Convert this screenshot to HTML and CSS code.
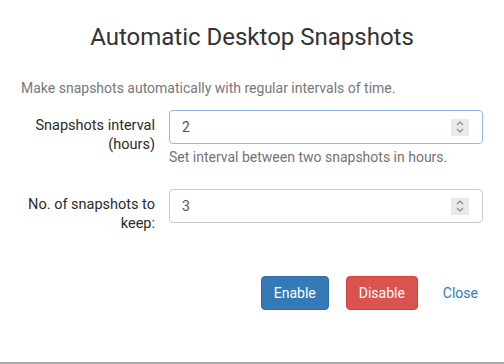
FILE: index.html
```html
<!DOCTYPE html>
<html lang="en">

<head>
    <meta charset="UTF-8">
    <meta name="viewport" content="width=device-width, initial-scale=1.0">
    <link rel="stylesheet" href="styles.css">
    <title>Automatic Desktop Snapshots</title>
</head>

<body>
    <div class="modal">
        <h1 class="title">Automatic Desktop Snapshots</h1>
        <p class="intro">Make snapshots automatically with regular intervals of time.</p>

        <div class="row">
            <label class="label">Snapshots interval (hours)</label>
            <div class="control">
                <div class="field focus">
                    <span class="value">2</span>
                    <span class="spin">
                        <svg width="10" height="14" viewBox="0 0 10 14">
                            <polyline points="2,5 5,2 8,5" />
                            <polyline points="2,9 5,12 8,9" />
                        </svg>
                    </span>
                </div>
                <div class="help">Set interval between two snapshots in hours.</div>
            </div>
        </div>

        <div class="row">
            <label class="label">No. of snapshots to keep:</label>
            <div class="control">
                <div class="field">
                    <span class="value">3</span>
                    <span class="spin">
                        <svg width="10" height="14" viewBox="0 0 10 14">
                            <polyline points="2,5 5,2 8,5" />
                            <polyline points="2,9 5,12 8,9" />
                        </svg>
                    </span>
                </div>
            </div>
        </div>

        <div class="footer">
            <button type="button" class="btn btn-primary">Enable</button>
            <button type="button" class="btn btn-danger">Disable</button>
            <button type="button" class="btn btn-link">Close</button>
        </div>
    </div>
    <div class="bottomLine"></div>
</body>

</html>
```
FILE: styles.css
```css
* {
    box-sizing: border-box;
}

html,
body {
    margin: 0;
    height: 364px;
    overflow: hidden;
}

body {
    background-color: #fff;
    color: #333;
    font-family: Roboto, "Liberation Sans", sans-serif;
    font-size: 14px;
    line-height: 20px;
    display: flex;
    flex-direction: column;
}

.modal {
    padding: 0 21px;
    flex: 1;
}

.title {
    margin: 22px 0 0;
    font-size: 24px;
    font-weight: 400;
    line-height: 30px;
    text-align: center;
}

.intro {
    margin: 26px 0 0;
    color: #777;
}

.row {
    display: flex;
    gap: 14px;
    margin-top: 12px;
}

.row + .row {
    margin-top: 22px;
}

.label {
    width: 134px;
    text-align: right;
    font-size: 14.5px;
    font-weight: 400;
    color: #2b2b2b;
    padding-top: 6px;
    line-height: 19px;
}

.control {
    flex: 1;
}

.field {
    height: 34px;
    border: 1px solid #ccc;
    border-radius: 4px;
    display: flex;
    align-items: center;
    padding: 0 12px;
}

.field.focus {
    border-color: #8cbbe3;
}

.value {
    flex: 1;
    color: #555;
}

.spin {
    width: 18px;
    height: 17px;
    background: #e9e9ed;
    display: flex;
    align-items: center;
    justify-content: center;
    margin-right: 1px;
}

.spin svg {
    fill: none;
    stroke: #8a8a8a;
    stroke-width: 1.2px;
}

.help {
    margin-top: 3px;
    color: #737373;
}

.footer {
    display: flex;
    justify-content: flex-end;
    margin-top: 43px;
    margin-right: -8px;
}

.btn {
    font-family: inherit;
    font-size: 14px;
    line-height: 20px;
    padding: 6px 12px;
    border: 1px solid transparent;
    border-radius: 4px;
    height: 34px;
}

.btn-primary {
    background-color: #337ab7;
    border-color: #2e6da4;
    color: #fff;
}

.btn-danger {
    background-color: #d9534f;
    border-color: #d43f3a;
    color: #fff;
    margin-left: 17px;
}

.btn-link {
    background: none;
    color: #337ab7;
    margin-left: 12px;
}

.bottomLine {
    height: 2px;
    background: #a9a9a9;
}
```
